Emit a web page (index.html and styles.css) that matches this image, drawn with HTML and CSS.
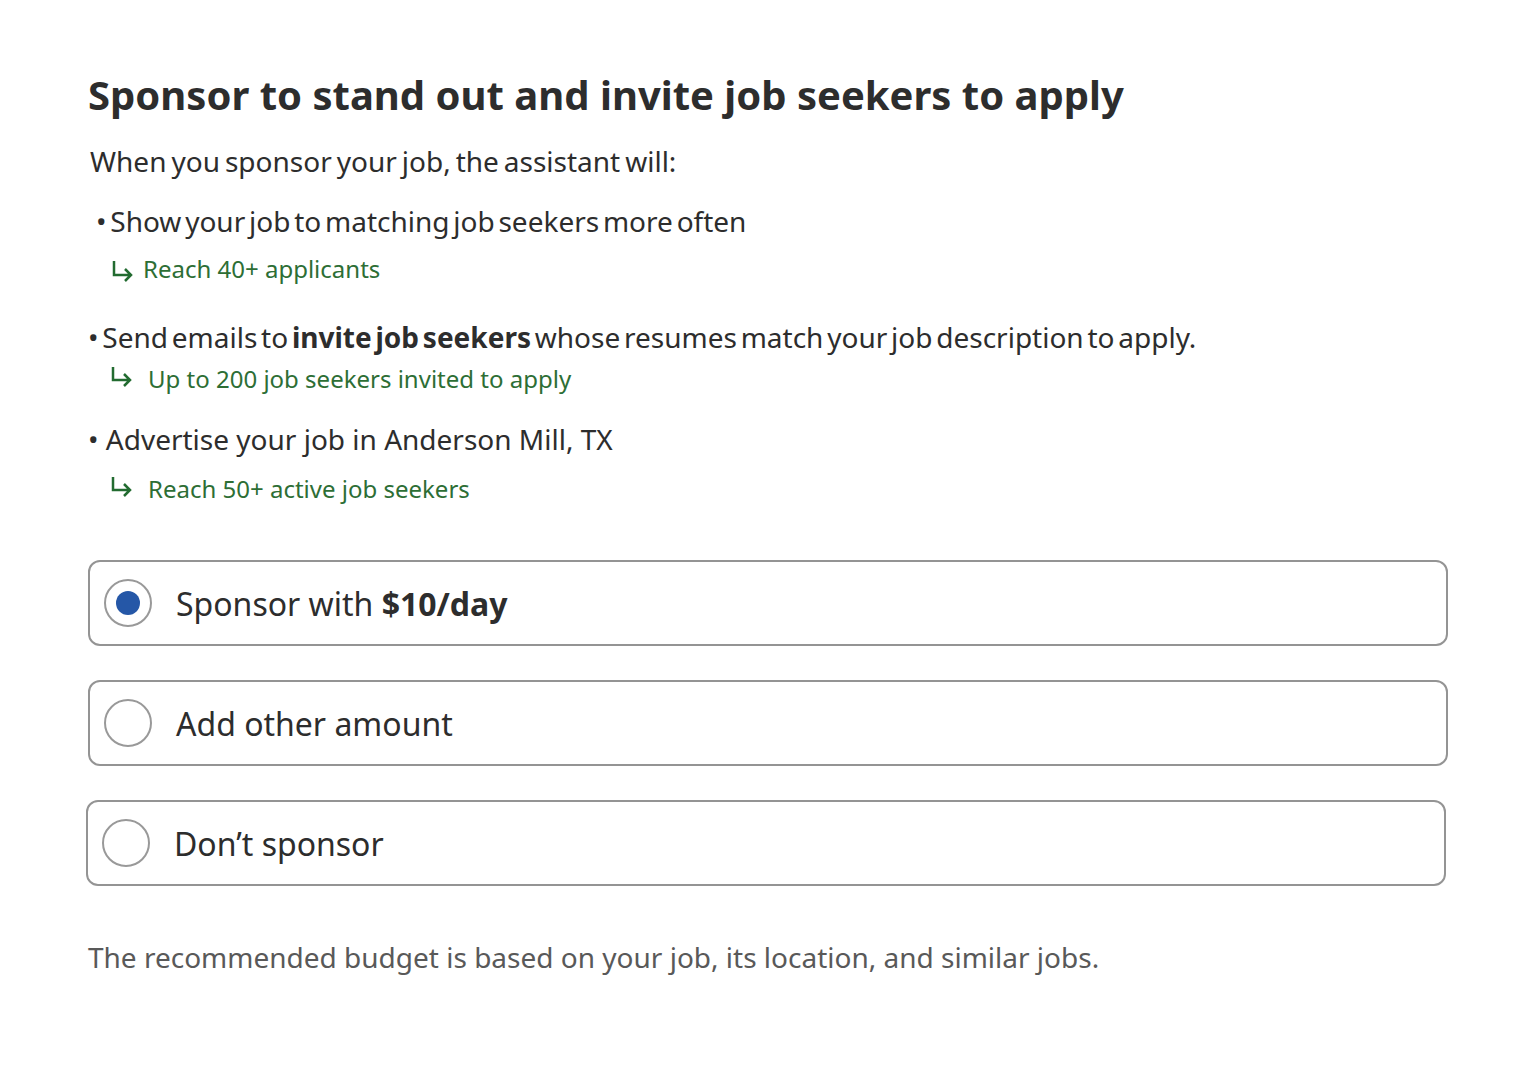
FILE: index.html
```html
<!DOCTYPE html>
<html lang="en">
<head>
    <meta charset="UTF-8">
    <meta name="viewport" content="width=device-width, initial-scale=1.0">
    <title>Sponsor your job</title>
    <link rel="stylesheet" href="styles.css">
</head>
<body>
    <div class="page">
        <h1 class="title">Sponsor to stand out and invite job seekers to apply</h1>
        <p class="intro">When you sponsor your job, the assistant will:</p>

        <!-- What sponsoring does -->
        <ul class="benefits">
            <li class="benefit first">
                <p class="point tight">• Show your job to matching job seekers more often</p>
                <p class="result">
                    <svg class="arrow" viewBox="0 0 24 26"><path d="M3 5v14h17M14 13l6 6-6 6" fill="none" stroke="currentColor" stroke-width="2.5"/></svg>
                    Reach 40+ applicants
                </p>
            </li>
            <li class="benefit second">
                <p class="point tight">• Send emails to <strong>invite job seekers</strong> whose resumes match your job description to apply.</p>
                <p class="result">
                    <svg class="arrow" viewBox="0 0 24 26"><path d="M3 1v13h17M14 8l6 6-6 6" fill="none" stroke="currentColor" stroke-width="2.5"/></svg>
                    Up to 200 job seekers invited to apply
                </p>
            </li>
            <li class="benefit third">
                <p class="point">• Advertise your job in Anderson Mill, TX</p>
                <p class="result">
                    <svg class="arrow" viewBox="0 0 24 26"><path d="M3 1v13h17M14 8l6 6-6 6" fill="none" stroke="currentColor" stroke-width="2.5"/></svg>
                    Reach 50+ active job seekers
                </p>
            </li>
        </ul>

        <!-- Budget options -->
        <div class="options">
            <label class="option">
                <span class="radio checked"></span>
                <span class="label">Sponsor with <strong>$10/day</strong></span>
            </label>
            <label class="option">
                <span class="radio"></span>
                <span class="label">Add other amount</span>
            </label>
            <label class="option shifted">
                <span class="radio"></span>
                <span class="label">Don’t sponsor</span>
            </label>
        </div>

        <p class="note">The recommended budget is based on your job, its location, and similar jobs.</p>
    </div>
</body>
</html>
```

FILE: styles.css
```css
body {
    font-family: "Noto Sans", "Open Sans", sans-serif;
    margin: 0;
    padding: 0;
    background-color: #ffffff;
    color: #2d2d2d;
}
.page {
    padding: 69px 88px 0 88px;
    width: 1360px;
}
.title {
    font-size: 40px;
    font-weight: 700;
    line-height: 52px;
    margin: 0;
}
.intro {
    font-size: 28px;
    line-height: 36px;
    margin: 22px 0 0 2px;
    word-spacing: -2.3px;
}
.benefits {
    list-style: none;
    margin: 0;
    padding: 0;
}
.benefit p {
    margin: 0;
}
.point {
    font-size: 28px;
    line-height: 38px;
}
.tight {
    word-spacing: -3.5px;
}
.result {
    display: flex;
    align-items: center;
    gap: 8px;
    font-size: 24px;
    line-height: 32px;
    color: #2d6e35;
}
.arrow {
    width: 24px;
    height: 26px;
    flex-shrink: 0;
    color: #226b30;
}
.first {
    margin-top: 23px;
    padding-left: 8px;
}
.first .result {
    margin-top: 13px;
    padding-left: 15px;
}
.second {
    margin-top: 33px;
}
.second .result {
    margin-top: 7px;
    padding-left: 22px;
    gap: 14px;
}
.third {
    margin-top: 25px;
}
.third .result {
    margin-top: 15px;
    padding-left: 22px;
    gap: 14px;
}
.options {
    display: flex;
    flex-direction: column;
    gap: 34px;
    margin-top: 55px;
}
.option {
    display: flex;
    align-items: center;
    gap: 24px;
    height: 82px;
    padding: 0 14px;
    border: 2px solid #949494;
    border-radius: 12px;
}
.shifted {
    margin-left: -2px;
    margin-right: 2px;
}
.radio {
    box-sizing: border-box;
    width: 48px;
    height: 48px;
    border: 2px solid #999999;
    border-radius: 50%;
    display: flex;
    align-items: center;
    justify-content: center;
}
.radio.checked::after {
    content: "";
    width: 24px;
    height: 24px;
    border-radius: 50%;
    background: #2557a7;
}
.label {
    font-size: 32px;
}
.note {
    font-size: 28px;
    line-height: 38px;
    color: #595959;
    margin: 52px 0 0 0;
}
```
